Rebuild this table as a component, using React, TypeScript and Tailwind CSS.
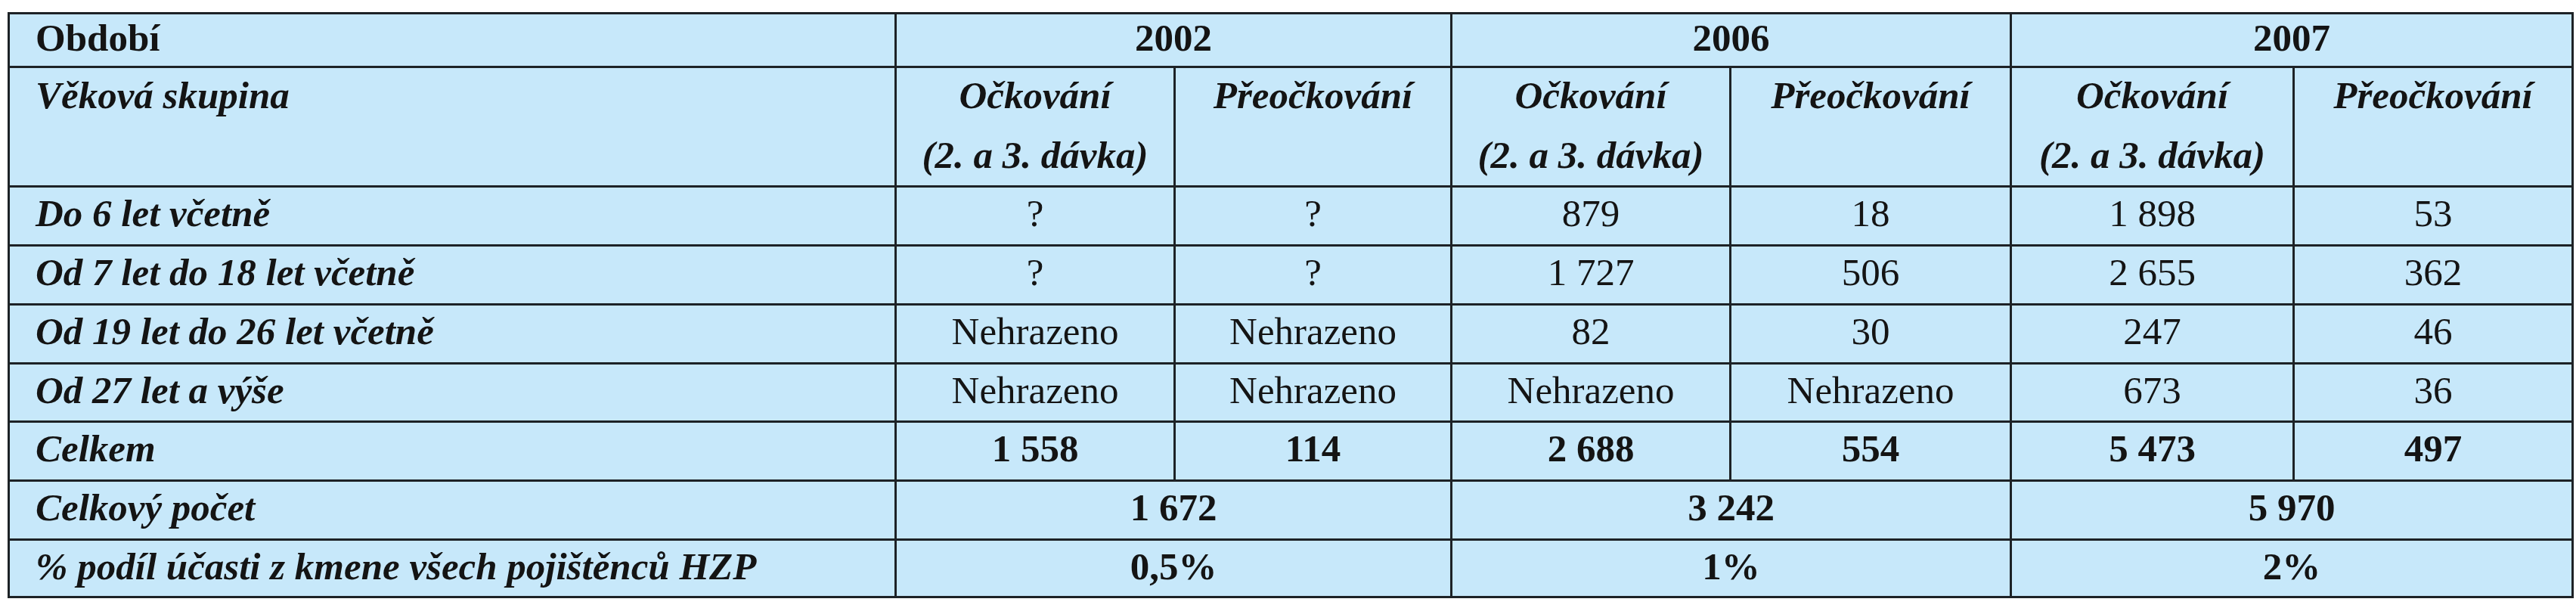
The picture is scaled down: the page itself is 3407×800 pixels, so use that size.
import React from "react";

const B = "border-[3px] border-[#1d2226] p-0 align-top";
const L = `${B} text-left pl-[34px] font-bold italic`;
const C = `${B} text-center`;

type Row = { label: string; vals: string[]; bold?: boolean };

const rows: Row[] = [
  { label: "Do 6 let včetně", vals: ["?", "?", "879", "18", "1 898", "53"] },
  { label: "Od 7 let do 18 let včetně", vals: ["?", "?", "1 727", "506", "2 655", "362"] },
  { label: "Od 19 let do 26 let včetně", vals: ["Nehrazeno", "Nehrazeno", "82", "30", "247", "46"] },
  { label: "Od 27 let a výše", vals: ["Nehrazeno", "Nehrazeno", "Nehrazeno", "Nehrazeno", "673", "36"] },
  { label: "Celkem", vals: ["1 558", "114", "2 688", "554", "5 473", "497"], bold: true },
];

const heights = ["h-[78px]", "h-[78px]", "h-[78px]", "h-[77px]", "h-[78px]"];

export default function App() {
  return (
    <div className="min-h-[800px] w-[3407px] bg-white pt-[16px] pl-[10px]">
      <table
        className="table-fixed border-collapse bg-[#c7e8fa] text-[51px] text-[#141414]"
        style={{ fontFamily: '"Liberation Serif", "Times New Roman", serif', width: 3391 }}
      >
        <colgroup>
          <col className="w-[1173px]" />
          <col className="w-[369px]" />
          <col className="w-[366px]" />
          <col className="w-[369px]" />
          <col className="w-[371px]" />
          <col className="w-[374px]" />
          <col className="w-[369px]" />
        </colgroup>
        <tbody>
          <tr className="h-[71px] leading-[63px]">
            <td className={`${B} text-left pl-[34px] font-bold`}>Období</td>
            <td colSpan={2} className={`${C} font-bold`}>2002</td>
            <td colSpan={2} className={`${C} font-bold`}>2006</td>
            <td colSpan={2} className={`${C} font-bold`}>2007</td>
          </tr>
          <tr className="h-[156px] leading-[79px]">
            <td className={L}>
              <div className="-mt-[3px]">Věková skupina</div>
            </td>
            {[0, 1, 2].map((i) => (
              <React.Fragment key={i}>
                <td className={`${C} font-bold italic`}>
                  <div className="-mt-[3px]">
                    Očkování
                    <br />
                    (2. a 3. dávka)
                  </div>
                </td>
                <td className={`${C} font-bold italic`}>
                  <div className="-mt-[3px]">Přeočkování</div>
                </td>
              </React.Fragment>
            ))}
          </tr>
          {rows.map((r, i) => (
            <tr key={r.label} className={`${heights[i]} leading-[69px]`}>
              <td className={L}>{r.label}</td>
              {r.vals.map((v, j) => (
                <td key={j} className={`${C} ${r.bold ? "font-bold" : "font-normal"}`}>
                  {v}
                </td>
              ))}
            </tr>
          ))}
          <tr className="h-[78px] leading-[69px]">
            <td className={L}>Celkový počet</td>
            <td colSpan={2} className={`${C} font-bold`}>1 672</td>
            <td colSpan={2} className={`${C} font-bold`}>3 242</td>
            <td colSpan={2} className={`${C} font-bold`}>5 970</td>
          </tr>
          <tr className="h-[76px] leading-[69px]">
            <td className={L}>% podíl účasti z kmene všech pojištěnců HZP</td>
            <td colSpan={2} className={`${C} font-bold`}>0,5%</td>
            <td colSpan={2} className={`${C} font-bold`}>1%</td>
            <td colSpan={2} className={`${C} font-bold`}>2%</td>
          </tr>
        </tbody>
      </table>
    </div>
  );
}
